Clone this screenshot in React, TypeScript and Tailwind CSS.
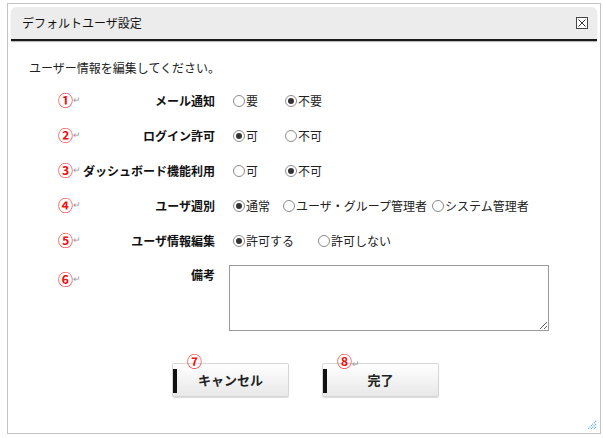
import React from "react";

const font = { fontFamily: '"Noto Sans CJK JP", "Noto Sans", sans-serif' };

function Radio({ checked }: { checked?: boolean }) {
  return (
    <span className="inline-flex h-[12px] w-[12px] items-center justify-center rounded-full border border-[#8a8a8a] bg-white">
      {checked && <span className="h-[6px] w-[6px] rounded-full bg-[#333]" />}
    </span>
  );
}

function Opt({ label, checked, w }: { label: string; checked?: boolean; w: string }) {
  return (
    <span className={`inline-flex items-center gap-[1px] whitespace-nowrap ${w}`}>
      <Radio checked={checked} />
      <span>{label}</span>
    </span>
  );
}

function Num({ n }: { n: string }) {
  return (
    <span className="inline-flex items-center">
      <span className="text-[15px] font-bold leading-none text-[#ee1111]">{n}</span>
      <span className="text-[9px] leading-none text-[#999]">↵</span>
    </span>
  );
}

const rows: { n: string; label: string; opts: { label: string; checked?: boolean; w: string }[] }[] = [
  { n: "①", label: "メール通知", opts: [{ label: "要", w: "w-[52px]" }, { label: "不要", checked: true, w: "w-[60px]" }] },
  { n: "②", label: "ログイン許可", opts: [{ label: "可", checked: true, w: "w-[52px]" }, { label: "不可", w: "w-[60px]" }] },
  { n: "③", label: "ダッシュボード機能利用", opts: [{ label: "可", w: "w-[52px]" }, { label: "不可", checked: true, w: "w-[60px]" }] },
  {
    n: "④",
    label: "ユーザ週別",
    opts: [
      { label: "通常", checked: true, w: "w-[50px]" },
      { label: "ユーザ・グループ管理者", w: "w-[149px]" },
      { label: "システム管理者", w: "w-[100px]" },
    ],
  },
  { n: "⑤", label: "ユーザ情報編集", opts: [{ label: "許可する", checked: true, w: "w-[85px]" }, { label: "許可しない", w: "w-[80px]" }] },
];

function Btn({ label, n }: { label: string; n: string }) {
  return (
    <div className="relative">
      <div className="absolute -top-[10px] left-[15px] z-10">
        <span className="text-[15px] font-bold leading-none text-[#ee1111]">{n}</span>
        {n === "⑧" && <span className="text-[9px] text-[#999]">↵</span>}
      </div>
      <button className="relative flex h-[34px] w-[117px] items-center justify-center rounded-[2px] border border-[#d6d6d6] bg-gradient-to-b from-white to-[#e8e8e8] text-[13px] font-bold text-[#222] shadow-[0_1px_1px_rgba(0,0,0,0.15)]">
        <span className="absolute left-0 top-[5px] h-[24px] w-[4px] bg-[#111]" />
        {label}
      </button>
    </div>
  );
}

export default function App() {
  return (
    <div className="h-[438px] w-[603px] bg-white pl-[7px] pt-[3px] text-[12px] text-[#222]" style={font}>
      <div className="relative flex h-[431px] w-[594px] flex-col border border-[#c4c4c4] bg-white p-[3px]">
        {/* ヘッダー */}
        <div className="flex h-[34px] items-center justify-between rounded-t-[6px] border-b-2 border-[#1a1a1a] bg-[#ececec] pl-[11px] pr-[9px] shadow-[0_1px_1px_rgba(0,0,0,0.3)]">
          <span className="text-[12px] text-[#111]">デフォルトユーザ設定</span>
          <span className="flex h-[12px] w-[12px] items-center justify-center border border-[#444] bg-white">
            <svg width="8" height="8" viewBox="0 0 8 8">
              <path d="M0.5 0.5 L7.5 7.5 M7.5 0.5 L0.5 7.5" stroke="#333" strokeWidth="1" />
            </svg>
          </span>
        </div>

        <div className="pl-[18px] pt-[19px] leading-[16px]">ユーザー情報を編集してください。</div>

        <div className="mt-[7px] flex flex-col">
          {rows.map((r) => (
            <div key={r.n} className="flex h-[35px] items-center">
              <div className="box-content w-[22px] shrink-0 pl-[47px]">
                <Num n={r.n} />
              </div>
              <div className="w-[135px] shrink-0 whitespace-nowrap text-right font-bold text-[#111]">{r.label}</div>
              <div className="flex items-center pl-[18px]">
                {r.opts.map((o) => (
                  <Opt key={o.label} label={o.label} checked={o.checked} w={o.w} />
                ))}
              </div>
            </div>
          ))}
          <div className="flex pt-[7px]">
            <div className="box-content w-[22px] shrink-0 pl-[47px] pt-[6px]">
              <Num n="⑥" />
            </div>
            <div className="w-[135px] shrink-0 pt-[1px] text-right font-bold text-[#111]">備考</div>
            <div className="pl-[14px]">
              <textarea className="h-[66px] w-[320px] resize border border-[#9a9a9a] bg-white outline-none" />
            </div>
          </div>
        </div>

        <div className="mt-[28px] flex gap-[33px] pl-[161px]">
          <Btn label="キャンセル" n="⑦" />
          <Btn label="完了" n="⑧" />
        </div>

        <svg className="absolute bottom-[3px] right-[3px]" width="10" height="10" viewBox="0 0 10 10">
          <path d="M9 1 L1 9 M9 4 L4 9 M9 7 L7 9" stroke="#4aa8e8" strokeWidth="1.2" strokeDasharray="1 1" />
        </svg>
      </div>
    </div>
  );
}
